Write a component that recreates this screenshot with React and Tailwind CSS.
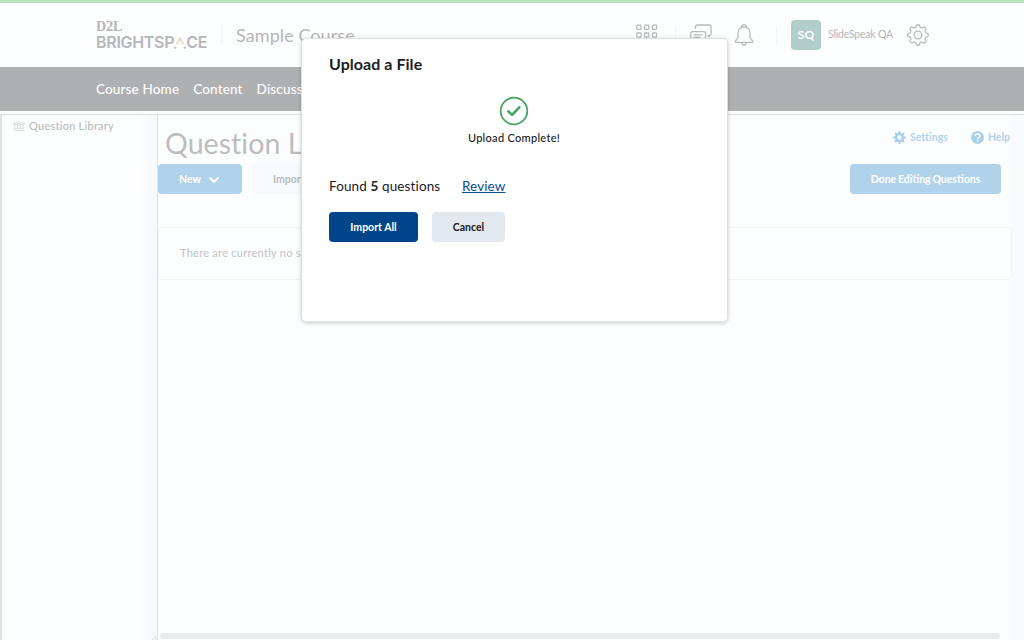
import React from "react";

function Grid() {
  return (
    <svg className="h-[22px] w-[22px]" viewBox="0 0 22 22" fill="none" stroke="#b9bbbd" strokeWidth="1.3">
      {[1.2, 9, 16.8].map((y) =>
        [0.8, 8.6, 16.4].map((x) => <rect key={x + "-" + y} x={x} y={y} width="4.2" height="4.2" rx="0.7" />)
      )}
    </svg>
  );
}

function Chat() {
  return (
    <svg className="h-[22px] w-[22px]" viewBox="0 0 22 22" fill="none" stroke="#b9bbbd" strokeWidth="1.3" strokeLinecap="round" strokeLinejoin="round">
      <path d="M5.500 4.300V2.600C5.500 1.600 6.200 1 7.100 1h12.300c1 0 1.700.7 1.700 1.600v7.200c0 1-.7 1.600-1.700 1.600h-.4v1.400l-1.200-1" />
      <path d="M2.500 7.600h11.300c1 0 1.700.7 1.700 1.600V15c0 1-.7 1.600-1.700 1.600H7L3 20v-3.400h-.5C1.500 16.600.8 16 .8 15V9.200c0-1 .7-1.600 1.700-1.600z" />
      <path d="M4 10.800h8.400M4 13.500h6" />
    </svg>
  );
}

function Bell() {
  return (
    <svg className="h-[22px] w-[20px]" viewBox="0 0 20 22" fill="none" stroke="#b9bbbd" strokeWidth="1.3" strokeLinecap="round" strokeLinejoin="round">
      <path d="M7.200 3.600C7.200 1.900 8.400.8 10 .8s2.800 1.100 2.800 2.800" />
      <path d="M4 13.200V9.200C4 5.500 6.500 3 10 3s6 2.500 6 6.200v4c0 1.900 2.800 2.700 2.800 4.600 0 .4-.2.600-.6.600H1.800c-.4 0-.6-.2-.6-.6 0-1.900 2.800-2.700 2.800-4.600z" />
      <path d="M7.800 18.600c.2 1.600 1 2.500 2.200 2.500s2-.9 2.200-2.500" />
    </svg>
  );
}

// Eight-toothed gear outline traced in polar coordinates around (11, 11).
function gearPath(mid, depth) {
  const points = [];
  for (let i = 0; i < 144; i++) {
    const angle = (i / 144) * Math.PI * 2;
    const r = mid + depth * Math.tanh(2.2 * Math.cos(8 * angle));
    points.push((11 + r * Math.cos(angle)).toFixed(2) + " " + (11 + r * Math.sin(angle)).toFixed(2));
  }
  return "M" + points.join("L") + "Z";
}

function GearOutline() {
  return (
    <svg className="h-[22px] w-[22px] shrink-0" viewBox="0 0 22 22" fill="none" stroke="#b9bbbd" strokeWidth="1.3" strokeLinejoin="round">
      <path d={gearPath(9.1, 1.2)} />
      <circle cx="11" cy="11" r="3.800" />
    </svg>
  );
}

function GearSolid() {
  return (
    <svg className="h-[13px] w-[13px]" viewBox="0 0 22 22">
      <path d={gearPath(9.4, 1.6)} fill="#a9d0ea" />
      <circle cx="11" cy="11" r="3.600" fill="#fbfdff" />
    </svg>
  );
}

function Help() {
  return (
    <svg className="h-[13px] w-[13px]" viewBox="0 0 13 13" fill="none">
      <circle cx="6.500" cy="6.500" r="6.500" fill="#a9d0ea" />
      <path d="M4 5C4 3.700 5.100 2.900 6.500 2.900s2.500.8 2.500 2c0 1.600-2.300 1.500-2.300 3" stroke="#fbfdff" strokeWidth="1.500" />
      <circle cx="6.600" cy="9.900" r=".9" fill="#fbfdff" />
    </svg>
  );
}

function Library() {
  return (
    <svg className="h-[10px] w-[12px]" viewBox="0 0 12 10" fill="none" stroke="#d3d5d7" strokeWidth=".8">
      <path d="M.5 3.300V2.600L6 .5l5.500 2.100v.7zM1.800 3.500v4M4.600 3.500v4M7.400 3.500v4M10.200 3.500v4M.9 7.600h10.200M.3 9.400h11.400M4.500 2.400h3" />
    </svg>
  );
}

function Divider() {
  return <span className="block h-[17px] w-0 border-l border-dotted border-[#eaecee]" />;
}

function Header() {
  return (
    <header className="flex h-[67px] shrink-0 border-t-[3px] border-[#b9e3bd] bg-[#fcfdff] pl-24 text-[#b5b7b9]">
      <div className="w-[125px] shrink-0 pt-[15px]">
        <div className="flex h-[16px] items-baseline font-['Liberation_Serif',serif] text-[14px] leading-[16px] font-bold tracking-[-0.300px]">
          D<span className="text-[15px]">2</span>L
        </div>
        <div className="flex h-[17px] items-center font-['Inter',sans-serif] text-[16px] leading-[17px] font-semibold tracking-[-0.300px]">
          BRIGHTSP
          <svg className="h-[12px] w-[12px] shrink-0" viewBox="0 0 12 12" fill="none" strokeWidth="1.700">
            <path d="M2.800 7.200L6 1l3.200 6.200" stroke="#f7d6c1" />
            <path d="M1.600 9.800L.8 11.600M10.400 9.800l.8 1.800" stroke="#b5b7b9" />
          </svg>
          CE
        </div>
      </div>
      <div className="pt-[23px]"><Divider /></div>
      <div className="w-[399px] shrink-0 pt-[20px] pl-[14px] text-[18px] leading-6 tracking-[0.080px]">Sample Course</div>
      <div className="flex h-[64px] items-center">
        <div className="w-[40px] pl-[15px]"><Grid /></div>
        <div className="ml-[14px]"><Divider /></div>
        <div className="ml-[14px]"><Chat /></div>
        <div className="ml-[22px]"><Bell /></div>
        <div className="ml-[22px]"><Divider /></div>
        <div className="ml-[14px] flex h-[30px] w-[30px] items-center justify-center rounded bg-[#b2cecb] text-[12px] font-bold text-white">SQ</div>
        <div className="ml-[7px] w-[79px] text-[10.500px] tracking-[-0.200px] whitespace-nowrap">SlideSpeak QA</div>
        <GearOutline />
      </div>
    </header>
  );
}

function Sidebar() {
  return (
    <aside className="w-[158px] shrink-0 border-t border-r border-l-2 border-[#dfe1e4] bg-linear-to-r from-[#fcfdff] from-88% to-[#f7f8fa]">
      <div className="flex h-[515px] items-start gap-1 pt-[3px] pl-[11px] text-[11px] leading-4 font-medium tracking-[0.250px] text-[#babcbe]">
        <div className="pt-[3px]"><Library /></div>
        Question Library
      </div>
      <svg className="mt-[6px] ml-auto h-[5px] w-[6px]" viewBox="0 0 6 5" stroke="#d3d5d7" strokeWidth=".8">
        <path d="M0 5L5 0M3 5l3-3" />
      </svg>
    </aside>
  );
}

function Main() {
  return (
    <main className="flex min-w-0 grow flex-col border-t border-[#dfe1e4] bg-linear-to-r from-[#fcfdff] from-[98.500%] to-[#f9fafb] to-[98.700%]">
      <div className="flex h-[49px] shrink-0 justify-between pr-[14px]">
        <h1 className="pt-[10px] pl-[7px] text-[28.500px] leading-9 tracking-[0.050px] whitespace-nowrap text-[#bbbdbf]">Question Library</h1>
        <div className="flex h-[45px] items-center text-[10.500px] font-bold text-[#b0d3eb]">
          <GearSolid />
          <span className="ml-1 w-[61px] tracking-[0.010px]">Settings</span>
          <Help />
          <span className="ml-1">Help</span>
        </div>
      </div>
      <div className="flex h-[30px] shrink-0 pr-[23px] text-[10.500px] font-bold">
        <div className="flex w-[84px] items-center rounded bg-[#b0d3eb] pt-px pl-[21px] text-white">
          New
          <svg className="ml-[8px] h-[6px] w-[10px]" viewBox="0 0 10 6" fill="none" stroke="white" strokeWidth="1.800" strokeLinecap="round" strokeLinejoin="round"><path d="M1 1l4 4 4-4" /></svg>
        </div>
        <div className="ml-[10px] flex w-[79px] items-center rounded bg-[#f7f9fc] pt-px pl-[21px] text-[#bbbdbf]">Import</div>
        <div className="ml-auto flex w-[151px] items-center justify-center rounded bg-[#b0d3eb] pt-px text-white [word-spacing:-0.800px]">Done Editing Questions</div>
      </div>
      <div className="mt-[33px] mr-3 flex h-[53px] shrink-0 items-center rounded border border-[#f1f4f6] pl-[21px] text-[11px] font-medium tracking-[0.250px] text-[#c4c6c8]">
        There are currently no sections or questions
      </div>
      <div className="mt-auto mr-6 mb-[1px] ml-0.5 h-[6px] rounded-sm bg-[#e8eaeb]" />
    </main>
  );
}

function Dialog() {
  return (
    <section className="absolute top-[38px] left-[301px] flex h-[284px] w-[427px] flex-col rounded-[5px] border border-[#dfe1e3] bg-white pl-[27px] text-[#202122] shadow-[0_1px_4px_rgba(0,0,0,0.2)]">
      <h2 className="pt-[14px] text-[16px] leading-[22px] font-bold tracking-[0.050px]">Upload a File</h2>
      <div className="mt-[21px] mr-[28px] flex flex-col items-center">
        <svg className="h-[30px] w-[30px]" viewBox="0 0 30 30" fill="none" stroke="#46a661">
          <circle cx="15" cy="15" r="13.300" strokeWidth="1.800" />
          <path d="M9.300 15.400l3.800 3.400 7.200-7.500" strokeWidth="2.600" strokeLinecap="round" strokeLinejoin="round" />
        </svg>
        <div className="mt-[4px] text-[11px] leading-4 font-medium tracking-[0.300px]">Upload Complete!</div>
      </div>
      <div className="mt-[30px] flex text-[13.500px] leading-5">
        <span className="w-[133px] tracking-[0.120px]">Found <b>5</b> questions</span>
        <a className="tracking-[0.100px] text-[#06508f] underline underline-offset-1">Review</a>
      </div>
      <div className="mt-[16px] flex h-[30px] gap-[14px] text-[10.500px] font-bold">
        <button className="w-[89px] rounded bg-[#004489] pt-px text-white">Import All</button>
        <button className="w-[73px] rounded bg-[#e3e8ef] pt-px">Cancel</button>
      </div>
    </section>
  );
}

export default function App() {
  return (
    <div className="relative flex h-[640px] w-[1024px] flex-col overflow-hidden bg-[#fcfdff] font-['Lato',sans-serif]">
      <Header />
      <nav className="flex h-[44px] shrink-0 items-center gap-[14px] bg-[#afb0b2] pt-px pl-24 text-[13.500px] font-medium tracking-[0.150px] text-white">
        <span>Course Home</span>
        <span>Content</span>
        <span>Discussions</span>
      </nav>
      <div className="mt-[3px] flex min-h-0 grow">
        <Sidebar />
        <Main />
      </div>
      <Dialog />
    </div>
  );
}
